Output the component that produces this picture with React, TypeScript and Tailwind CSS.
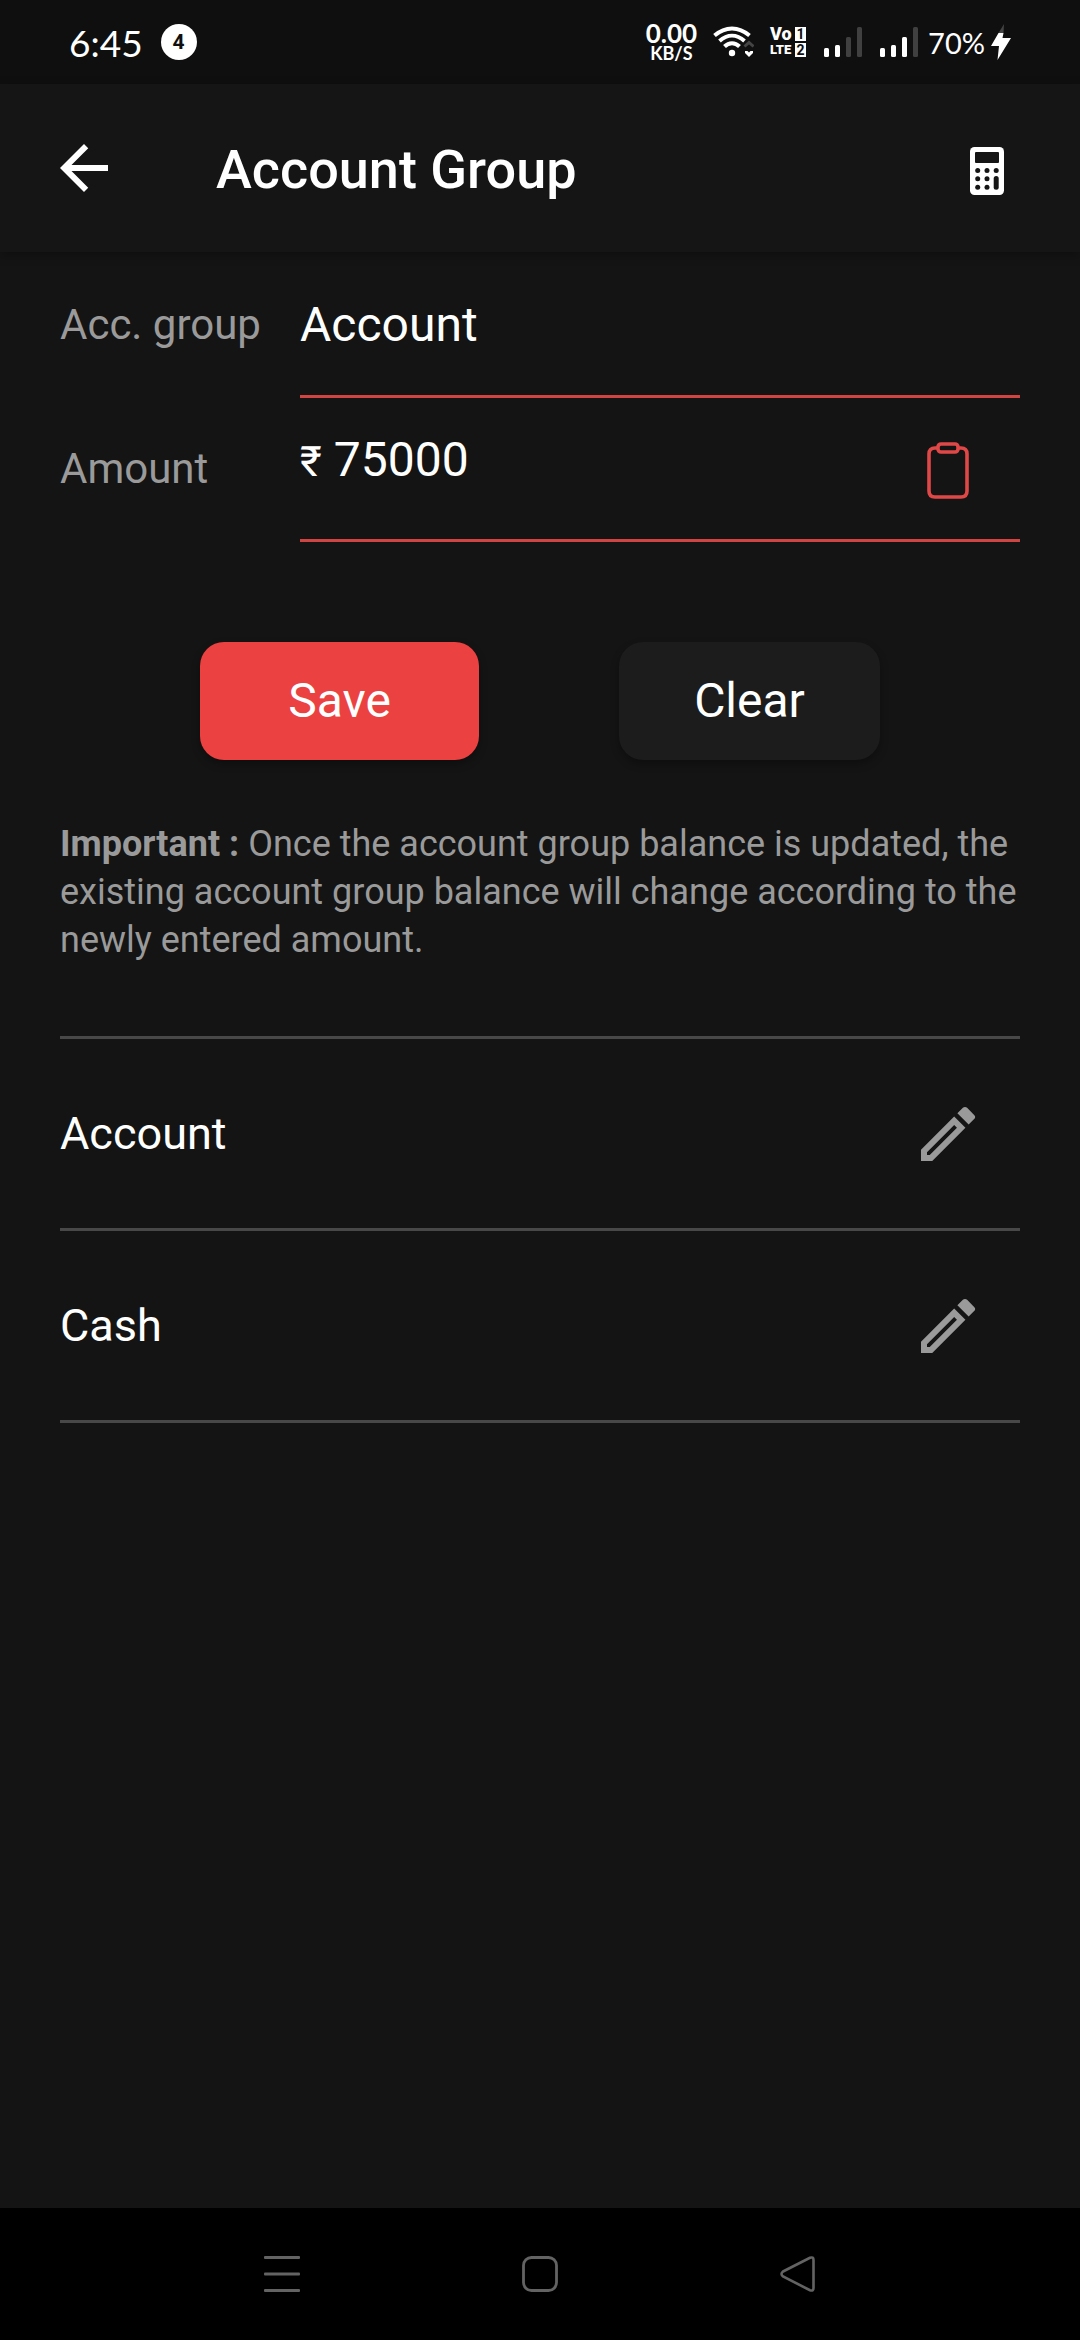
import { useState } from "react";
import { MdArrowBack, MdOutlineEdit } from "react-icons/md";

const groups = ["Account", "Cash"];

function WifiIcon() {
  return (
    <svg width="41" height="32" viewBox="0 0 41 32" aria-label="Wi-Fi" role="img">
      <g fill="none" stroke="#fff" strokeWidth="4">
        <path d="M1.5 9.5C12.5 0 25.5 0 36.500 9.500" />
        <path d="M6.500 15C14.500 8 23.500 8 31.500 15" />
        <path d="M11.500 20.500C16 16 22 16 26.500 20.500" />
      </g>
      <circle cx="19" cy="27" r="3.200" fill="#fff" />
      <path d="M31.500 20.500L36 16.500L40.500 20.500" fill="none" stroke="#444" strokeWidth="3" />
      <path d="M32 25H40V27L36 31L32 27Z" fill="#fff" />
      <path d="M34 24.500L36 26.500L38 24.500Z" fill="#0f0f0f" />
    </svg>
  );
}

function SignalIcon({ level }: { level: number }) {
  const bars = [9, 12, 20, 30];
  return (
    <svg width="38" height="30" viewBox="0 0 38 30" aria-label="Signal" role="img">
      {bars.map((h, i) => (
        <rect key={h} x={i * 11} y={30 - h} width="5" height={h} rx="1.500" fill={i < level ? "#fff" : "#404040"} />
      ))}
    </svg>
  );
}

function BoltIcon() {
  return (
    <svg width="20" height="36" viewBox="0 0 20 36" aria-label="Charging" role="img">
      <path d="M13 0L12.500 9H7.500Z" fill="#444" />
      <path d="M7.500 9H12.500L11.500 14H20L6.500 36L8 22H0Z" fill="#fff" />
    </svg>
  );
}

function VolteIcon() {
  return (
    <div className="grid grid-cols-[25px_11px] gap-y-0.5 leading-[14px] font-bold">
      <span className="text-[18px] font-black">Vo</span>
      <span className="bg-[#fff] text-center text-[14px] text-[#0f0f0f]">1</span>
      <span className="text-[13px] font-black">LTE</span>
      <span className="bg-[#fff] text-center text-[14px] text-[#0f0f0f]">2</span>
    </div>
  );
}

function CalculatorIcon() {
  return (
    <svg width="34" height="48" viewBox="0 0 34 48" aria-hidden="true">
      <rect width="34" height="48" rx="4.500" fill="#fff" />
      <g fill="#151515">
        <rect x="5" y="5" width="24" height="11" rx="1" />
        {[23.500, 31.700, 40.200].map((y) => [7.700, 17, 26.200].map((x) => (x > 20 && y > 30 ? null : <circle key={`${x}-${y}`} cx={x} cy={y} r="2.500" />)))}
        <rect x="23.700" y="29" width="5" height="13.700" rx="2.500" />
      </g>
    </svg>
  );
}

function ClipboardIcon() {
  return (
    <svg width="42" height="57" viewBox="0 0 42 57" fill="none" stroke="#e04848" strokeWidth="3.600" aria-hidden="true">
      <path d="M10.500 6H8Q2 6 2 12V49Q2 55 8 55H34Q40 55 40 49V12Q40 6 34 6H31.500" />
      <rect x="11" y="2" width="20" height="8" rx="3" />
    </svg>
  );
}

export default function App() {
  const [name, setName] = useState("Account");
  const [amount, setAmount] = useState("75000");

  return (
    <div className="flex min-h-screen flex-col bg-[#141414] font-['Roboto',sans-serif] text-[#fff]">
      <div className="flex h-21 items-center justify-between bg-[#0f0f0f] px-[69px]">
        <div className="flex items-center gap-[18px]">
          <span className="font-['Lato',sans-serif] text-[37px] leading-none">6:45</span>
          <span className="flex size-9 items-center justify-center rounded-full bg-[#fff] text-[21px] leading-none font-bold text-[#0f0f0f]">4</span>
        </div>
        <div className="flex items-center gap-[18px]">
          <div className="flex items-center gap-4">
            <div className="text-center font-['Lato',sans-serif] font-bold">
              <div className="text-[26px] leading-[22px]">0.00</div>
              <div className="text-[18px] leading-[18px]">KB/S</div>
            </div>
            <WifiIcon />
            <VolteIcon />
          </div>
          <SignalIcon level={2} />
          <SignalIcon level={3} />
          <div className="-ml-2 flex items-center gap-[6px]">
            <span className="font-['Lato',sans-serif] text-[29px] leading-none">70%</span>
            <BoltIcon />
          </div>
        </div>
      </div>

      <header className="flex h-42 items-center bg-[#151515] pr-[57px] pl-12 shadow-[0_3px_10px_rgba(0,0,0,0.3)]">
        <button type="button" aria-label="Back">
          <MdArrowBack className="size-18" />
        </button>
        <h1 className="ml-24 flex-1 pt-1 text-[54px] leading-none font-medium">Account Group</h1>
        <button type="button" aria-label="Calculator" className="flex w-18 justify-center pt-1.5">
          <CalculatorIcon />
        </button>
      </header>

      <main className="flex-1 px-15 pt-0.5">
        <form onSubmit={(e) => e.preventDefault()}>
          <div className="grid h-36 grid-cols-[240px_minmax(0,1fr)]">
            <label htmlFor="group" className="flex items-center pb-1 text-[42px] text-[#9a9a9a]">Acc. group</label>
            <input id="group" value={name} onChange={(e) => setName(e.target.value)} className="min-w-0 border-b-3 border-[#d04444] bg-transparent text-[48px] outline-none" />
          </div>
          <div className="grid h-36 grid-cols-[240px_minmax(0,1fr)]">
            <label htmlFor="amount" className="flex items-center pb-1 text-[42px] text-[#9a9a9a]">Amount</label>
            <div className="flex items-stretch border-b-3 border-[#d04444]">
              <div className="flex min-w-0 flex-1 items-baseline gap-3 pt-6.5">
                <span className="text-[42px]">₹</span>
                <input id="amount" inputMode="decimal" value={amount} onChange={(e) => setAmount(e.target.value)} className="min-w-0 flex-1 bg-transparent text-[48px] outline-none" />
              </div>
              <button type="button" aria-label="Paste amount" className="mr-9 flex w-18 items-center justify-center pt-1">
                <ClipboardIcon />
              </button>
            </div>
          </div>
          <div className="mt-25 flex justify-center gap-35">
            <button type="submit" className="h-[118px] w-[279px] rounded-3xl bg-[#ec4141] text-[48px] shadow-[0_4px_8px_rgba(0,0,0,0.3)]">Save</button>
            <button type="button" onClick={() => { setName(""); setAmount(""); }} className="h-[118px] w-[261px] rounded-3xl bg-[#1c1c1c] text-[48px] shadow-[0_4px_8px_rgba(0,0,0,0.3)]">Clear</button>
          </div>
        </form>

        <p className="mt-15 text-[36px] leading-12 text-[#9a9a9a]">
          <strong className="font-bold">Important :</strong> Once the account group balance is updated, the existing account group balance will change according to the newly entered amount.
        </p>

        <ul className="mt-18 border-t-3 border-[#484848]">
          {groups.map((group) => (
            <li key={group} className="flex h-48 items-center justify-between border-b-3 border-[#484848] pr-9">
              <span className="text-[45px]">{group}</span>
              <button type="button" aria-label={`Edit ${group}`} className="text-[#9a9a9a]">
                <MdOutlineEdit className="size-18" />
              </button>
            </li>
          ))}
        </ul>
      </main>

      <nav className="flex h-33 items-center justify-center gap-[186px] bg-[#000]">
        <button type="button" aria-label="Recent apps" className="flex w-18 justify-center">
          <svg width="36" height="36" viewBox="0 0 36 36" fill="#636363"><rect width="36" height="3" rx="1" /><rect y="16.500" width="36" height="3" rx="1" /><rect y="33" width="36" height="3" rx="1" /></svg>
        </button>
        <button type="button" aria-label="Home" className="flex w-18 justify-center">
          <svg width="36" height="36" viewBox="0 0 36 36" fill="none" stroke="#636363" strokeWidth="2.800"><rect x="1.500" y="1.500" width="33" height="33" rx="8" /></svg>
        </button>
        <button type="button" aria-label="Back" className="flex w-18 justify-center">
          <svg width="36" height="36" viewBox="0 0 36 36" fill="none" stroke="#636363" strokeWidth="2.600"><path d="M3 15.500L30 1.800Q33.500 0.500 33.500 4V32Q33.500 35.500 30 34.200L3 20.500Q0 18 3 15.500Z" /></svg>
        </button>
      </nav>
    </div>
  );
}
